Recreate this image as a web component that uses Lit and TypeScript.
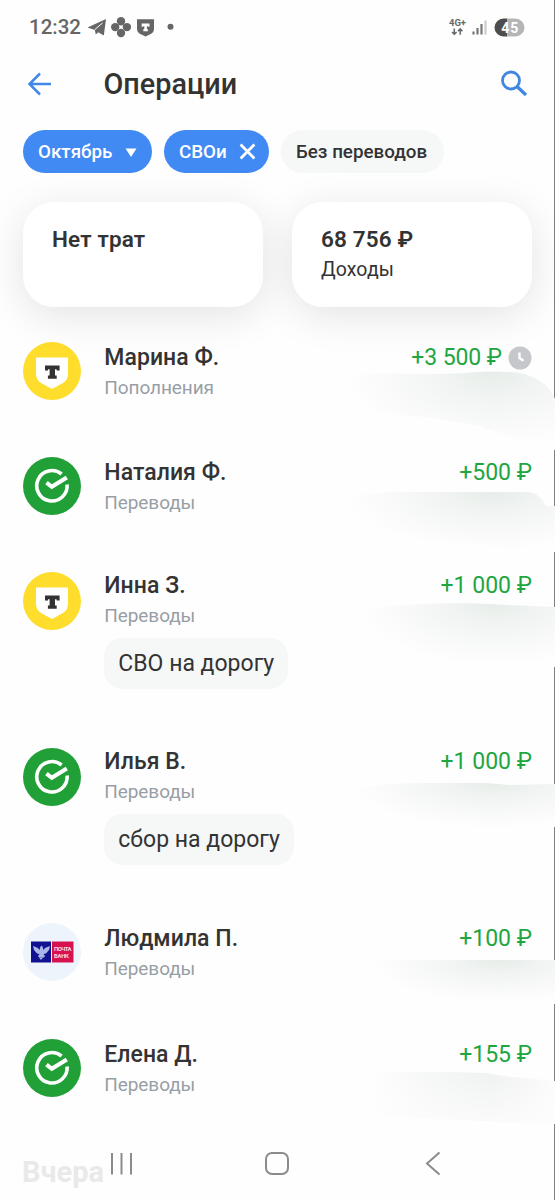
import { LitElement, html, svg, css, nothing } from "lit";
import { customElement, property } from "lit/decorators.js";

type Bank = "t" | "sber" | "pochta";

interface Operation {
  name: string;
  category: string;
  amount: string;
  bank: Bank;
  pending?: boolean;
  note?: string;
}

const operations: Operation[] = [
  { name: "Марина Ф.", category: "Пополнения", amount: "+3 500 ₽", bank: "t", pending: true },
  { name: "Наталия Ф.", category: "Переводы", amount: "+500 ₽", bank: "sber" },
  { name: "Инна З.", category: "Переводы", amount: "+1 000 ₽", bank: "t", note: "СВО на дорогу" },
  { name: "Илья В.", category: "Переводы", amount: "+1 000 ₽", bank: "sber", note: "сбор на дорогу" },
  { name: "Людмила П.", category: "Переводы", amount: "+100 ₽", bank: "pochta" },
  { name: "Елена Д.", category: "Переводы", amount: "+155 ₽", bank: "sber" },
];

const logos = {
  t: svg`
    <circle cx="29" cy="29" r="29" fill="#ffdd2d"/>
    <path d="M13 15.500h32v16.500c0 4-2 7.300-5.500 9.300L29 47l-10.500-5.700C15 39.300 13 36 13 32z" fill="#fff"/>
    <path d="M22 23.500h14.600v5h-3v-1.300h-1.600v6.300h1.700v3.200h-8.800v-3.200h1.700v-6.300H25v1.300h-3z" fill="#333"/>`,
  sber: svg`
    <circle cx="29" cy="29" r="29" fill="#21a038"/>
    <path d="M38.600 17A15.200 15.200 0 1 0 44.100 27.500" fill="none" stroke="#fff" stroke-width="3.600"/>
    <path d="M23.500 25.700l5.300 4.100L43.800 20.500" fill="none" stroke="#fff" stroke-width="4.200"/>`,
  pochta: svg`
    <circle cx="29" cy="29" r="29" fill="#eef4fc"/>
    <rect x="8" y="18.500" width="20" height="21" fill="#10128f"/>
    <rect x="29" y="18.500" width="21.500" height="21" fill="#d6124f"/>
    <path d="M10 23l5 2 1.500 2 1-3.500 1-.8 1 .8 1 3.500 1.500-2 5-2-1 4-3 3.500-2.500.5 1.500 2-1 1.500h-5l-1-1.500 1.500-2-2.500-.5-3-3.500z" fill="#a9b6e6"/>
    <path d="M16 34.500h4l-2 2.500z" fill="#a9b6e6"/>
    <text x="31" y="28" class="pb" textLength="17.500">ПОЧТА</text>
    <text x="31" y="35.300" class="pb" textLength="15">БАНК</text>`,
};

@customElement("operation-row")
class OperationRow extends LitElement {
  @property({ attribute: false }) op!: Operation;

  static styles = css`
    :host { display: block; }
    .row { display: flex; height: 115.400px; }
    .row.noted { height: 175.400px; }
    .logo { width: 58px; height: 58px; flex: none; margin-right: 23.300px; }
    .pb { font: 700 6px Roboto, sans-serif; fill: #fadbe4; }
    .text { display: flex; flex-direction: column; align-items: flex-start; flex: 1; padding-top: 1px; }
    .noted .text { padding-top: 0; margin-top: -1px; }
    .top { display: flex; width: 100%; height: 30px; align-items: center; justify-content: space-between; }
    .name { font-size: 23px; font-weight: 500; color: #333; line-height: 30px; letter-spacing: 0.050px; }
    .money { display: flex; align-items: center; gap: 6px; font-size: 23px; line-height: 30px; color: #1fa640; }
    .clock { width: 24px; height: 24px; }
    .pending { letter-spacing: -0.080px; }
    .cat { font-size: 19px; line-height: 24px; margin-top: 3px; color: #989ea5; letter-spacing: -0.080px; }
    .note {
      margin-top: 10px; height: 51px; box-sizing: border-box; padding: 0 14px; border-radius: 18px;
      background: #f6f8f8; font-size: 23px; line-height: 51px; color: #333; white-space: nowrap;
    }
  `;

  render() {
    const { name, category, amount, bank, pending, note } = this.op;
    return html`<div class="row ${note ? "noted" : ""}">
      <svg class="logo" viewBox="0 0 58 58">${logos[bank]}</svg>
      <div class="text">
        <div class="top">
          <span class="name">${name}</span>
          <span class="money ${pending ? "pending" : ""}">${amount}${pending
            ? html`<svg class="clock" viewBox="0 0 24 24">
                <circle cx="12" cy="12" r="11.500" fill="#c5c7cb"/>
                <path d="M11.500 6.500V12l4 2.700" fill="none" stroke="#fff" stroke-width="2.400"/>
              </svg>`
            : nothing}</span>
        </div>
        <span class="cat">${category}</span>
        ${note ? html`<span class="note">${note}</span>` : nothing}
      </div>
    </div>`;
  }
}

@customElement("app-root")
class AppRoot extends LitElement {
  static styles = css`
    :host {
      display: block; position: relative; width: 555px; height: 1200px; overflow: hidden;
      background: #fefefe; font-family: Roboto, sans-serif; color: #333;
    }
    .page { position: relative; display: flex; flex-direction: column; height: 1200px; }
    .status { display: flex; align-items: center; height: 53px; padding: 0 28px 0 29px; color: #666; }
    .time { font-size: 20.500px; font-weight: 500; width: 58px; }
    .apps { width: 94px; height: 24px; }
    .sys { width: 80px; height: 24px; margin-left: auto; }
    .net { font: 700 8.500px Roboto, sans-serif; fill: #666; }
    .pct { font: 700 14px Roboto, sans-serif; fill: #fff; }
    .bar { display: flex; align-items: center; height: 62px; padding: 0 27px; }
    .back { width: 26px; height: 26px; margin-right: 50.500px; }
    .title { margin: 0; font-size: 28.800px; font-weight: 500; line-height: 40px; flex: 1; }
    .find { width: 28px; height: 28px; }
    .chips { display: flex; gap: 12px; padding: 15px 23px 0; height: 72px; box-sizing: border-box; }
    .chip {
      display: flex; align-items: center; height: 43px; border-radius: 22px; box-sizing: border-box;
      padding: 0 15px; font-size: 18.800px; font-weight: 500; background: #f6f8f8; white-space: nowrap;
    }
    .chip.on { background: #4189f3; color: #fff; }
    .month { width: 129px; justify-content: space-between; }
    .tag { width: 105px; justify-content: space-between; padding-right: 13px; }
    .plain { width: 163px; }
    .down { width: 12px; height: 10px; }
    .close { width: 17px; height: 17px; }
    .cards { display: flex; gap: 29px; padding: 15px 23px 34.700px; }
    .card {
      position: relative; flex: 1; height: 105px; box-sizing: border-box; padding: 22px 29px; border-radius: 31px;
      background: #fff; box-shadow: 0 8px 42px rgba(0, 0, 0, 0.110);
    }
    .sum { font-size: 22.500px; font-weight: 600; line-height: 31px; letter-spacing: 0.150px; }
    .kind { font-size: 19.500px; line-height: 30px; letter-spacing: 0.100px; }
    .list { padding: 0 23px; }
    .soon { position: absolute; left: 22px; top: 1154px; font-size: 29px; font-weight: 700; line-height: 36px; color: #e9e9e9; }
    .haze { position: absolute; left: 0; top: 0; width: 555px; height: 1200px; pointer-events: none; }
    .nav { position: absolute; left: 0; top: 1140px; width: 555px; height: 48px; }
  `;

  render() {
    return html`<div class="page">
      <div class="status">
        <span class="time">12:32</span>
        <svg class="apps" viewBox="0 0 94 24">
          <g fill="#666">
            <path d="M.5 12.500L19 4l-2.200 16.500-5.600-3.300-2.400 2.300-1-4.500z"/>
            <circle cx="34" cy="6.200" r="4.200"/><circle cx="34" cy="18" r="4.200"/>
            <circle cx="28.200" cy="12.100" r="4.200"/><circle cx="39.900" cy="12.100" r="4.200"/>
            <path d="M50 4.300h17v9.500c0 2.300-1 3.900-2.800 4.900L58.500 21.500l-5.700-2.800C51 17.700 50 16.100 50 13.800z"/>
            <circle cx="83.500" cy="11.700" r="3"/>
          </g>
          <path d="M7.500 14.800L15.500 8" stroke="#fefefe" stroke-width="1"/>
          <path d="M54.700 8.500h7.800v3.200h-1.800v-.7h-.8v3.300h1v2h-4.600v-2h1V11h-.8v.7h-1.800z" fill="#fff"/>
        </svg>
        <svg class="sys" viewBox="0 0 80 24">
          <text x="2" y="11" class="net" textLength="17" lengthAdjust="spacingAndGlyphs">4G+</text>
          <path d="M7.300 13.500v6M5 17l2.300 2.300L9.600 17M13.200 19.800v-6M10.900 16.200l2.300-2.300 2.300 2.300" fill="none" stroke="#666" stroke-width="1.500"/>
          <path d="M26.500 16.500v3M30.500 13v6.500M34.500 9v10.500" stroke="#777" stroke-width="2.200"/>
          <path d="M38.500 5.500v14" stroke="#ccc" stroke-width="2.200"/>
          <path d="M60 3.500v18h-3.500a9 9 0 0 1 0-18z" fill="#4d4d4d"/>
          <path d="M60 3.500h8.500a9 9 0 0 1 0 18H60z" fill="#b5b5b5"/>
          <text x="54.200" y="17.500" class="pct" textLength="17">45</text>
        </svg>
      </div>
      <div class="bar">
        <svg class="back" viewBox="0 0 26 26">
          <path d="M24 13H3M13 2.500L2.500 13 13 23.500" fill="none" stroke="#4187e8" stroke-width="2.500"/>
        </svg>
        <h1 class="title">Операции</h1>
        <svg class="find" viewBox="0 0 28 28">
          <circle cx="11" cy="10.500" r="8.500" fill="none" stroke="#4187e0" stroke-width="2.800"/>
          <path d="M17 16.500l9 8.500" stroke="#4187e0" stroke-width="3.300"/>
        </svg>
      </div>
      <div class="chips">
        <span class="chip on month">Октябрь
          <svg class="down" viewBox="0 0 12 10"><path d="M.5 1.500h11L6 10z" fill="#fff"/></svg>
        </span>
        <span class="chip on tag">СВОи
          <svg class="close" viewBox="0 0 16 16"><path d="M1.500 1.500l13 13M14.500 1.500l-13 13" stroke="#fff" stroke-width="2.600"/></svg>
        </span>
        <span class="chip plain">Без переводов</span>
      </div>
      <div class="cards">
        <div class="card"><div class="sum">Нет трат</div></div>
        <div class="card"><div class="sum">68 756 ₽</div><div class="kind">Доходы</div></div>
      </div>
      <div class="list">${operations.map((op) => html`<operation-row .op=${op}></operation-row>`)}</div>
      <div class="soon">Вчера</div>
      <svg class="haze" viewBox="0 0 555 1200">
        <defs>
          <radialGradient id="h" cx="0.700" cy="0" r="0.700" gradientTransform="scale(1 1.400)">
            <stop offset="0" stop-color="#e6ede9"/>
            <stop offset="0.400" stop-color="#f3f5f4"/>
            <stop offset="1" stop-color="#fefefe"/>
          </radialGradient>
          <linearGradient id="g">
            <stop offset="0" stop-color="#fdfdfd"/>
            <stop offset="0.400" stop-color="#f4f5f5"/>
            <stop offset="0.650" stop-color="#f0f2f1"/>
            <stop offset="1" stop-color="#fafbfa"/>
          </linearGradient>
          <linearGradient id="f" x2="0" y2="1">
            <stop offset="0" stop-color="#fefefe" stop-opacity="0"/>
            <stop offset="1" stop-color="#fefefe" stop-opacity="0.700"/>
          </linearGradient>
        </defs>
        <path d="M554.500 0V1200" stroke="#808080" stroke-width="1"/>
        <path d="M345 390q5-15 30-17 60 2 90 0 50-4 65 3 20 8 25 23v51q-40-12-75-24-60-12-130-14z" fill="url(#h)"/>
        <path d="M345 505q5-12 50-13h133q12 1 18 14h9v46q-70-6-205-20z" fill="url(#h)"/>
        <path d="M360 612q20-8 105-9l90 4v60H370z" fill="url(#h)"/>
        <path d="M350 795q10-12 75-12h60l25 2 45-1v43q-60 6-205-6z" fill="url(#h)"/>
        <path d="M370 960h185v44H370z" fill="url(#h)"/>
        <path id="s" d="M376 1073q60-2 110 0l18 3 51 5v43l-179-8z" fill="url(#g)"/>
        <path d="M376 1073q60-2 110 0l18 3 51 5v43l-179-8z" fill="url(#f)"/>
      </svg>
      <svg class="nav" viewBox="0 0 555 48">
        <g fill="none" stroke="#8b8b8b" stroke-width="2">
          <path d="M112 13v21.500M121.500 13v21.500M131 13v21.500"/>
          <rect x="266" y="13" width="22" height="21" rx="6"/>
          <path d="M439.500 12.500L427 23.500l12.500 11"/>
        </g>
      </svg>
    </div>`;
  }
}
